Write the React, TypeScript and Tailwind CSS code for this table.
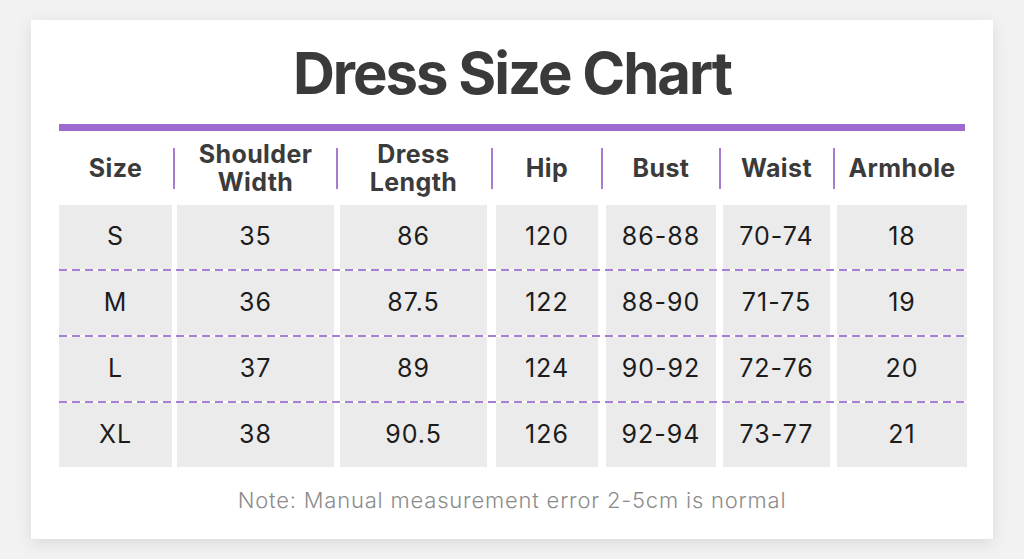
import React from 'react';

const HEADERS = [['Size'], ['Shoulder', 'Width'], ['Dress', 'Length'], ['Hip'], ['Bust'], ['Waist'], ['Armhole']];

const ROWS = [
  ['S', '35', '86', '120', '86-88', '70-74', '18'],
  ['M', '36', '87.5', '122', '88-90', '71-75', '19'],
  ['L', '37', '89', '124', '90-92', '72-76', '20'],
  ['XL', '38', '90.5', '126', '92-94', '73-77', '21'],
];

// column widths + left gaps, measured off the chart
const COLS = [
  'w-[113px]',
  'w-[157px] ml-[5px]',
  'w-[147px] ml-[6px]',
  'w-[102px] ml-[9px]',
  'w-[110px] ml-[8px]',
  'w-[107px] ml-[7px]',
  'w-[130px] ml-[7px]',
];

const DIVIDERS = ['', 'left-[-4px]', 'left-[-4px]', 'left-[-5px]', 'left-[-5px]', 'left-[-4px]', 'left-[-4px]'];

const App: React.FC = () => {
  return (
    <div className="w-[1024px] h-[559px] bg-[#f2f2f2] pt-[20px] font-['Inter',sans-serif]">
      <div className="mx-[31px] h-[519px] bg-white shadow-[0_4px_16px_rgba(0,0,0,0.10)] px-[28px] pt-[24px]">
        <h1 className="text-center text-[58px] leading-none font-bold text-[#3a3a3a] tracking-[-2px]">Dress Size Chart</h1>
        <div className="mt-[22px] h-[7px] bg-[#9d6bcf]" />

        <div className="flex h-[74px]">
          {HEADERS.map((h, i) => (
            <div key={i} className={`${COLS[i]} relative shrink-0 flex items-center justify-center`}>
              {i > 0 && <div className={`absolute ${DIVIDERS[i]} top-[17px] h-[41px] w-[2px] bg-[#a57bd4]`} />}
              <div className="text-center text-[25px] leading-[28px] font-bold tracking-[0.4px] text-[#3b3b3b]">
                {h.map((l) => (
                  <div key={l}>{l}</div>
                ))}
              </div>
            </div>
          ))}
        </div>

        <div>
          {ROWS.map((r, ri) => (
            <React.Fragment key={ri}>
              {ri > 0 && (
                <div className="h-[2px] bg-[repeating-linear-gradient(90deg,#a77fd6_0_8px,transparent_8px_13px)]" />
              )}
              <div className="flex h-[64px]">
                {r.map((c, ci) => (
                  <div key={ci} className={`${COLS[ci]} shrink-0 bg-[#ebebeb] flex items-center justify-center text-[25px] tracking-[1px] text-[#1c1c1c]`}>
                    {c}
                  </div>
                ))}
              </div>
            </React.Fragment>
          ))}
        </div>

        <p className="mt-[19px] text-center text-[22px] leading-[28px] font-light tracking-[0.8px] text-[#8c8c8c]">Note: Manual measurement error 2-5cm is normal</p>
      </div>
    </div>
  );
};

export default App;
